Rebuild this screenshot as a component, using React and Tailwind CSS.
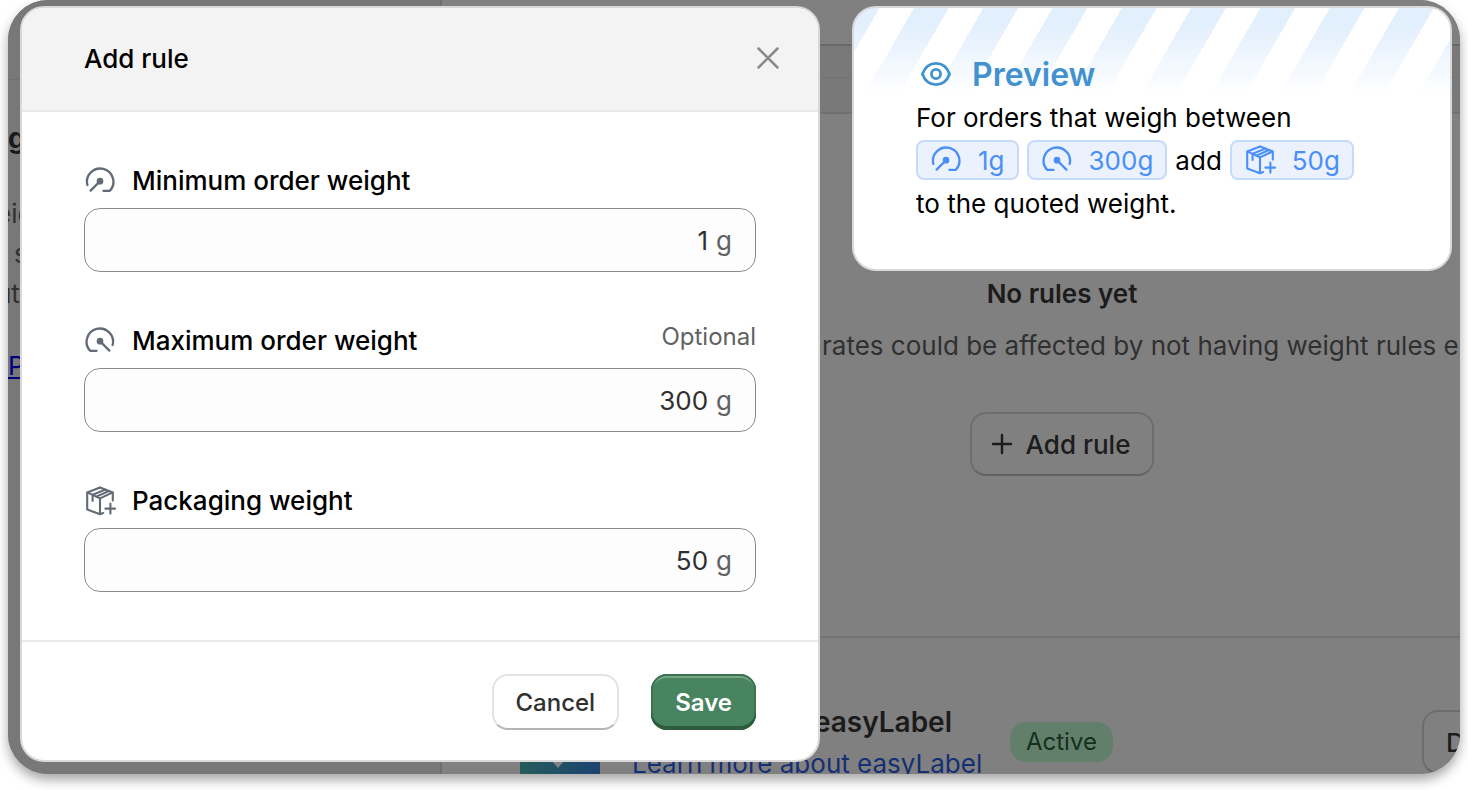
import React, { useState } from 'react';

const GaugeIcon = ({ flipped = false }) => (
  <svg viewBox="0 0 32 32" className="size-8 shrink-0" fill="none" stroke="currentColor" strokeWidth="2.3" strokeLinecap="round" strokeLinejoin="round" aria-hidden="true">
    <g transform={flipped ? 'translate(32 0) scale(-1 1)' : undefined}>
      <path d="M3.4 20A13.2 13.2 0 1 1 25.8 25.8H19.4" />
      <path d="M16 16.2L6.6 25.6" />
      <circle cx="16" cy="16.2" r="2.2" fill="currentColor" />
    </g>
  </svg>
);

const PackageIcon = () => (
  <svg viewBox="0 0 32 32" className="size-8 shrink-0" fill="none" stroke="currentColor" strokeWidth="2.1" strokeLinecap="round" strokeLinejoin="round" aria-hidden="true">
    <path d="M16 2.4L28.8 7.4V15.6M16 2.4L3.2 7.4V24.4L16 29.2L19.2 28M3.2 7.4L16 13.4L28.8 7.4M16 13.4V29.2" />
    <path d="M8.6 16V9.8L21.4 4.6M12.4 11.6L25 6" />
    <path d="M26.4 18.6V28.6M21.4 23.6H31" />
  </svg>
);

const EyeIcon = () => (
  <svg viewBox="0 0 32 32" className="size-8" fill="none" stroke="currentColor" strokeWidth="2.8" aria-hidden="true">
    <path d="M2.4 15C5 8 10 4.4 16 4.4S27 8 29.6 15C27 22 22 25.6 16 25.6S5 22 2.4 15Z" />
    <circle cx="16" cy="15" r="4.6" />
  </svg>
);

const fields = [
  { id: 'min', label: 'Minimum order weight', icon: <GaugeIcon /> },
  { id: 'max', label: 'Maximum order weight', icon: <GaugeIcon flipped />, optional: true },
  { id: 'pack', label: 'Packaging weight', icon: <PackageIcon /> },
];

const WeightField = ({ field, value, onChange }) => (
  <div>
    <div className="flex h-[52px] items-center justify-between pb-[3px]">
      <label htmlFor={field.id} className="flex items-center gap-4 font-medium text-black">
        <span className="text-[#616a75]">{field.icon}</span>
        {field.label}
      </label>
      {field.optional && <span className="pb-2 text-2xl text-[#616161]">Optional</span>}
    </div>
    <div className="flex h-16 items-center gap-2 rounded-2xl border border-[#8a8a8a] bg-[#fdfdfd] px-[23px]">
      <input
        id={field.id}
        value={value}
        onChange={(e) => onChange(field.id, e.target.value)}
        className="min-w-0 flex-1 bg-transparent text-right text-[#303030] outline-none"
      />
      <span className="text-[#616161]">g</span>
    </div>
  </div>
);

const Chip = ({ icon, children }) => (
  <span className="flex h-10 items-center gap-4 rounded-lg border-2 border-[#c5dafc] bg-[#ebf2fe] px-3 text-[#4a8ff7]">
    {icon}
    {children}
  </span>
);

// Page that stays visible behind the dimmed backdrop
const Backdrop = () => (
  <div className="absolute inset-0 flex overflow-hidden text-[#303030]">
    <aside className="w-[434px] shrink-0 overflow-hidden border-r-2 border-[#6e6e6e] bg-[#787878]">
      <div className="h-20 border-b border-[#707070]" />
      <h2 className="mt-[38px] text-[28px] font-bold leading-10 text-[#1a1a1a]">g</h2>
      <p className="-ml-3 mt-9 leading-10">
        eig
        <br />
        <span className="ml-[18px]">s</span>
        <br />
        ut
      </p>
      <a href="#" className="mt-8 block leading-10 text-[#00007f] underline">P</a>
    </aside>

    <div className="flex min-w-0 flex-1 flex-col overflow-hidden bg-[#808080]">
      <div className="h-11 shrink-0" />
      <div className="h-[70px] shrink-0 border-t-2 border-b-2 border-t-[#696969] border-b-[#707070] bg-[#797979]">
        <div className="h-8 border-b border-[#727272]" />
      </div>
      <div className="flex h-[524px] w-[1240px] shrink-0 flex-col items-center border-b-2 border-[#737373] pt-40">
        <h3 className="font-semibold leading-10 text-[#1b1b1b]">No rules yet</h3>
        <p className="mt-3 self-start whitespace-nowrap pl-[380px] leading-10">
          rates could be affected by not having weight rules es
        </p>
        <button className="mt-[46px] flex h-16 items-center gap-3 rounded-2xl border-2 border-[#6d6d6d] border-b-[#626262] pr-[22px] pl-[18px] font-medium text-[#1c1c1c]">
          <svg viewBox="0 0 24 24" className="size-6" stroke="currentColor" strokeWidth="2.4" strokeLinecap="round" aria-hidden="true">
            <path d="M12 3V21M3 12H21" />
          </svg>
          Add rule
        </button>
      </div>
      <div className="flex w-[1240px] items-start pl-[78px] pt-16">
        <svg viewBox="0 0 80 80" className="mt-2 size-20 shrink-0" aria-hidden="true">
          <defs>
            <linearGradient id="logo" x1="0" y1="0" x2="1" y2="0">
              <stop offset="0" stopColor="#255c5b" />
              <stop offset="1" stopColor="#1d4370" />
            </linearGradient>
          </defs>
          <rect width="80" height="80" rx="8" fill="url(#logo)" />
          <path d="M24 42L38 58L54 40" fill="#808080" />
        </svg>
        <div className="ml-8 w-[346px]">
          <div className="pr-[26px] text-right text-[28px] font-semibold leading-10 text-[#1b1b1b]">easyLabel</div>
          <a href="#" className="mt-0.5 block whitespace-nowrap leading-10 text-[#152f74]">Learn more about easyLabel</a>
        </div>
        <span className="ml-8 mt-5 rounded-2xl bg-[#627f6b] px-4 text-2xl leading-10 text-[#14301c]">Active</span>
        <button className="ml-[309px] mt-2 h-16 rounded-2xl border-2 border-[#6d6d6d] border-b-[#626262] px-[22px] font-medium text-[#1c1c1c]">D</button>
      </div>
    </div>
  </div>
);

export default function App() {
  const [weights, setWeights] = useState({ min: '1', max: '300', pack: '50' });
  const update = (id, value) => setWeights({ ...weights, [id]: value });

  return (
    <div className="overflow-hidden bg-white px-2 pb-4 font-[Inter,sans-serif] text-[26px]">
      <div className="relative overflow-hidden rounded-[40px] bg-[#808080] shadow-[0_6px_12px_rgba(0,0,0,0.35)]">
        <Backdrop />

        <div className="relative grid grid-cols-[4fr_3fr] items-start gap-8 pt-[6px] pr-2 pb-3 pl-3">
          <section role="dialog" aria-label="Add rule" className="overflow-hidden rounded-3xl border-2 border-[#d9d9d9] bg-white">
            <header className="flex h-[104px] items-center justify-between border-b-2 border-[#eaeaea] bg-[#f3f3f3] pr-9 pb-0.5 pl-[62px]">
              <h1 className="font-medium text-black">Add rule</h1>
              <button aria-label="Close" className="text-[#8a8a8a]">
                <svg viewBox="0 0 28 28" className="size-7" stroke="currentColor" strokeWidth="2.5" strokeLinecap="round" aria-hidden="true">
                  <path d="M4.5 4.5L23.5 23.5M23.5 4.5L4.5 23.5" />
                </svg>
              </button>
            </header>

            <div className="flex flex-col gap-11 px-[62px] pt-11 pb-12">
              {fields.map((field) => (
                <WeightField key={field.id} field={field} value={weights[field.id]} onChange={update} />
              ))}
            </div>

            <footer className="flex justify-end gap-8 border-t-2 border-[#eaeaea] px-[62px] pt-8 pb-[30px] text-2xl">
              <button className="h-14 rounded-2xl border-2 border-[#e3e3e3] border-b-[#b5b5b5] px-[22px] pt-0.5 font-medium text-[#303030]">
                Cancel
              </button>
              <button className="h-14 rounded-2xl bg-[#47845f] px-6 pt-0.5 font-semibold text-white shadow-[inset_0_-4px_0_#2b5c3e,inset_0_0_0_2px_#3a7350,inset_0_4px_0_#76a588]">
                Save
              </button>
            </footer>
          </section>

          <section className="rounded-3xl border-2 border-[#d9d9d9] bg-white bg-[linear-gradient(to_bottom,transparent_16px,white_88px),repeating-linear-gradient(120deg,#e2effd_0_22px,white_22px_52px,#e2effd_52px_60px)] px-[62px] pt-11 pb-[45px] text-black">
            <h2 className="flex h-[46px] items-center gap-5 pl-1 text-[32px] font-semibold text-[#4292cf]">
              <EyeIcon />
              Preview
            </h2>
            <p className="leading-10">For orders that weigh between</p>
            <div className="mt-0.5 flex flex-wrap items-center gap-2">
              <Chip icon={<GaugeIcon />}>{weights.min}g</Chip>
              <Chip icon={<GaugeIcon flipped />}>{weights.max}g</Chip>
              <span>add</span>
              <Chip icon={<PackageIcon />}>{weights.pack}g</Chip>
            </div>
            <p className="mt-1 leading-10">to the quoted weight.</p>
          </section>
        </div>
      </div>
    </div>
  );
}
